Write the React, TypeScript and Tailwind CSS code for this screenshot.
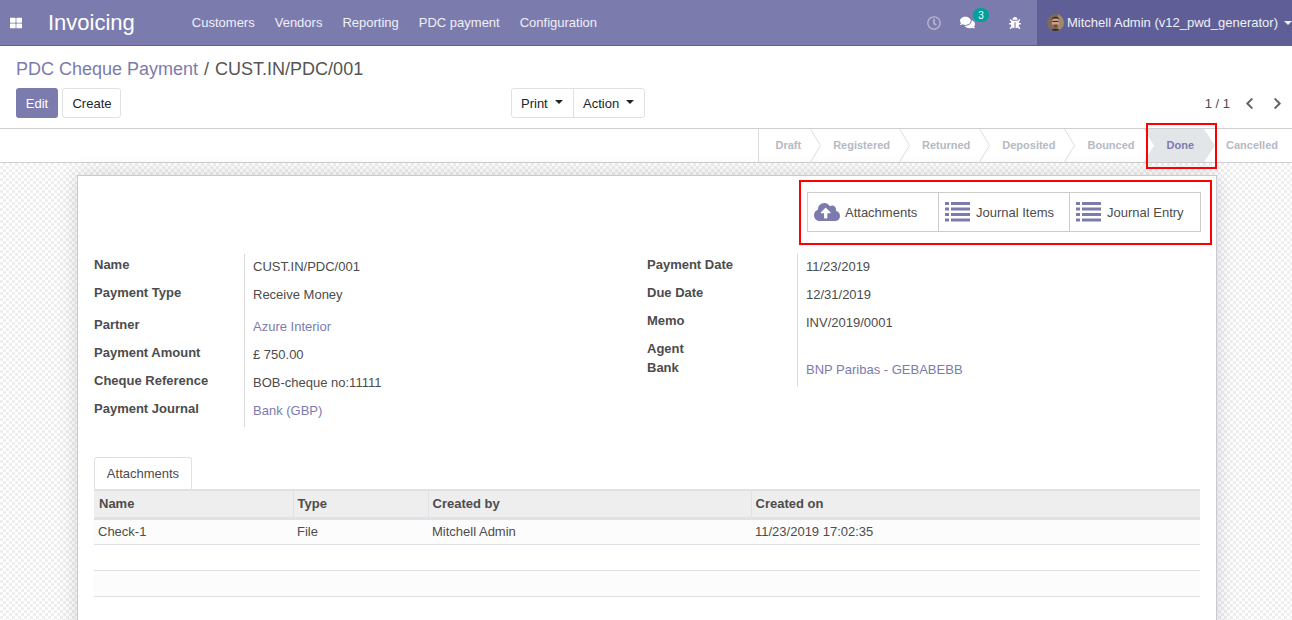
import { FaBug, FaChevronLeft, FaChevronRight, FaCloudUploadAlt, FaComments, FaRegClock, FaThLarge } from "react-icons/fa";

const menus = ["Customers", "Vendors", "Reporting", "PDC payment", "Configuration"];
const steps = ["Draft", "Registered", "Returned", "Deposited", "Bounced", "Done", "Cancelled"];

const leftFields = [
    { label: "Name", value: "CUST.IN/PDC/001", h: "h-[28px]" },
    { label: "Payment Type", value: "Receive Money", h: "h-[32px]" },
    { label: "Partner", value: "Azure Interior", link: true, h: "h-[28px]" },
    { label: "Payment Amount", value: "£ 750.00", h: "h-[28px]" },
    { label: "Cheque Reference", value: "BOB-cheque no:11111", h: "h-[28px]" },
    { label: "Payment Journal", value: "Bank (GBP)", link: true, h: "h-[29px]" },
];

const rightFields = [
    { label: "Payment Date", value: "11/23/2019", h: "h-[28px]" },
    { label: "Due Date", value: "12/31/2019", h: "h-[28px]" },
    { label: "Memo", value: "INV/2019/0001", h: "h-[28px]" },
    { label: "Agent", value: "", h: "h-[19px]" },
    { label: "Bank", value: "BNP Paribas - GEBABEBB", link: true, h: "h-[29px]" },
];

function ListIcon() {
    return (
        <svg width="25" height="20" viewBox="0 0 25 20" fill="#7C7BAD">
            <rect x="0" y="0" width="4" height="3" />
            <rect x="6" y="0" width="19" height="3" />
            <rect x="0" y="5.5" width="4" height="3" />
            <rect x="6" y="5.5" width="19" height="3" />
            <rect x="0" y="11" width="4" height="3" />
            <rect x="6" y="11" width="19" height="3" />
            <rect x="0" y="16.5" width="4" height="3" />
            <rect x="6" y="16.5" width="19" height="3" />
        </svg>
    );
}

function Avatar() {
    return (
        <svg width="17" height="17" viewBox="0 0 17 17" className="rounded-full">
            <rect width="17" height="17" fill="#7d6a58" />
            <rect x="11" width="6" height="17" fill="#a08a6c" />
            <ellipse cx="8.5" cy="8.5" rx="3.6" ry="4.6" fill="#cf9f8c" />
            <path d="M4.5 6 C5 1.5 12 1.5 12.5 6 L11 4.5 L6 4.5 Z" fill="#33261f" />
            <rect x="5.5" y="7" width="6" height="1" fill="#33261f" />
            <path d="M6 10.5 H11 L10 13 H7 Z" fill="#6b4a3c" />
            <path d="M4 17 C4 14 13 14 13 17 Z" fill="#2f2a2a" />
        </svg>
    );
}

function Field({ label, value, link, h }: { label: string; value: string; link?: boolean; h: string }) {
    return (
        <div className={`flex ${h}`}>
            <div className="w-[150px] shrink-0 font-bold text-[#4c4c4c] leading-[20px] pt-[1px]">{label}</div>
            <div className={`border-l border-[#d9d9d9] pl-[8px] pt-[3px] leading-[20px] flex-1 ${link ? "text-[#7C7BAD]" : "text-[#4c4c4c]"}`}>
                {value}
            </div>
        </div>
    );
}

function Step({ name, index }: { name: string; index: number }) {
    const done = name === "Done";
    const last = index === steps.length - 1;
    return (
        <div className={`relative flex h-full items-center px-[16px] font-bold text-[11px] ${done ? "text-[#7C7BAD]" : "text-[#b5b9c4]"}`}>
            {done && (
                <svg className="absolute left-[-7px] top-0 h-full" width="71" height="33" viewBox="0 0 71 33">
                    <path d="M0 0 H60 L71 16.5 L60 33 H0 L11 16.5 Z" fill="#e3e6e9" />
                </svg>
            )}
            <span className="relative">{name}</span>
            {!last && !done && (
                <svg className="absolute right-[-4px] top-0 h-full" width="11" height="33" viewBox="0 0 11 33" fill="none">
                    <path d="M0.5 0 L10.5 16.5 L0.5 33" stroke="#dcdcdc" />
                </svg>
            )}
        </div>
    );
}

export default function App() {
    return (
        <div className="relative h-[620px] w-[1292px] overflow-hidden bg-white font-['Liberation_Sans',Arial,sans-serif] text-[13px] text-[#4c4c4c]">
            <header className="flex h-[46px] items-center border-b border-[#5f5e97] bg-[#7C7BAD] text-white">
                <FaThLarge className="ml-[10px] text-[12px]" />
                <span className="ml-[26px] text-[22px]">Invoicing</span>
                <nav className="ml-[57px] flex gap-[20px] text-[13px] text-[#f0f0f7]">
                    {menus.map((m) => (
                        <span key={m}>{m}</span>
                    ))}
                </nav>
                <div className="ml-auto flex h-full items-center">
                    <FaRegClock className="text-[14px] text-[#b9b9d4]" />
                    <div className="relative ml-[19px]">
                        <FaComments className="text-[15px]" />
                        <span className="absolute left-[13px] top-[-7px] flex h-[14px] w-[16px] items-center justify-center rounded-full bg-[#00A09D] text-[10px]">3</span>
                    </div>
                    <FaBug className="ml-[34px] text-[12px]" />
                    <div className="ml-[16px] flex h-full w-[255px] items-center bg-[#5f5e97] pl-[10px]">
                        <Avatar />
                        <span className="ml-[3px] text-[13px] text-[#f0f0f7]">Mitchell Admin (v12_pwd_generator)</span>
                        <span className="ml-[6px] h-0 w-0 border-x-[4px] border-t-[4px] border-x-transparent border-t-[#f0f0f7]" />
                    </div>
                </div>
            </header>

            <section className="h-[83px] border-b border-[#cfcfcf] px-[16px]">
                <div className="flex h-[42px] items-end pb-[7px] text-[18px] leading-[24px] text-[#555555]">
                    <span className="text-[#7C7BAD]">PDC Cheque Payment</span>
                    <span className="mx-[6px]">/</span>
                    <span>CUST.IN/PDC/001</span>
                </div>
                <div className="flex items-start">
                    <button className="h-[30px] w-[42px] rounded-[3px] bg-[#7C7BAD] pt-[2px] text-white">Edit</button>
                    <button className="ml-[4px] h-[30px] w-[59px] rounded-[3px] border border-[#dee2e6] pl-px pt-[2px] text-[#212529]">Create</button>
                    <div className="ml-[390px] flex h-[30px] rounded-[3px] border border-[#dee2e6] text-[#212529]">
                        <div className="flex w-[61px] items-center pl-[9px] pt-[2px]">
                            Print
                            <span className="ml-[7px] h-0 w-0 -translate-y-[2px] border-x-[4px] border-t-[4px] border-x-transparent border-t-[#212529]" />
                        </div>
                        <div className="flex w-[71px] items-center border-l border-[#dee2e6] pl-[9px] pt-[2px]">
                            Action
                            <span className="ml-[7px] h-0 w-0 -translate-y-[2px] border-x-[4px] border-t-[4px] border-x-transparent border-t-[#212529]" />
                        </div>
                    </div>
                    <div className="-mr-[8px] ml-auto flex h-[30px] items-center">
                        <span className="pt-[2px]">1 / 1</span>
                        <FaChevronLeft className="ml-[13px] text-[13px] text-[#666]" />
                        <FaChevronRight className="ml-[15px] text-[13px] text-[#666]" />
                    </div>
                </div>
            </section>

            <section className="flex h-[34px] justify-end border-b border-[#cfcfcf]">
                <div className="-mr-[2px] flex h-[33px] border-l border-[#dcdcdc]">
                    {steps.map((s, i) => (
                        <Step key={s} name={s} index={i} />
                    ))}
                </div>
            </section>

            <main className="h-[457px] bg-[repeating-conic-gradient(#efefef_0_25%,#ffffff_0_50%)] bg-[length:6px_6px] pt-[12px]">
                <div className="ml-[77px] h-[500px] w-[1140px] border border-[#c9c9d1] bg-white pl-[16px] pr-[15px] pt-[16px] shadow-[0_0_20px_rgba(0,0,0,0.15)]">
                    <div className="flex justify-end">
                        <div className="flex h-[40px] w-[394px] border border-[#cccccc]">
                            <div className="flex w-[130px] items-center pl-[6px]">
                                <FaCloudUploadAlt className="text-[26px] text-[#7C7BAD]" />
                                <span className="ml-[5px] pt-[2px]">Attachments</span>
                            </div>
                            <div className="flex w-[131px] items-center border-l border-[#cccccc] pl-[6px]">
                                <ListIcon />
                                <span className="ml-[6px] pt-[2px]">Journal Items</span>
                            </div>
                            <div className="flex flex-1 items-center border-l border-[#cccccc] pl-[6px]">
                                <ListIcon />
                                <span className="ml-[6px] pt-[2px]">Journal Entry</span>
                            </div>
                        </div>
                    </div>

                    <div className="mt-[22px] flex">
                        <div className="w-[553px]">
                            {leftFields.map((f) => (
                                <Field key={f.label} {...f} />
                            ))}
                        </div>
                        <div className="w-[553px]">
                            {rightFields.map((f) => (
                                <Field key={f.label} {...f} />
                            ))}
                        </div>
                    </div>

                    <div className="mt-[30px] flex h-[32px]">
                        <div className="flex h-[33px] w-[98px] items-center justify-center rounded-t-[3px] border border-b-0 border-[#dee2e6] bg-white">Attachments</div>
                    </div>
                    <table className="relative w-[1106px] table-fixed border-collapse">
                        <thead>
                            <tr className="h-[28px] border-t-[2px] border-b-[3px] border-[#dee2e6] bg-[#eeeeee] text-left font-bold">
                                <th className="w-[199px] border-r-[1px] border-[#dee2e6] pl-[5px]">Name</th>
                                <th className="w-[135px] border-r-[1px] border-[#dee2e6] pl-[4px]">Type</th>
                                <th className="w-[323px] border-r-[1px] border-[#dee2e6] pl-[4px]">Created by</th>
                                <th className="pl-[4px]">Created on</th>
                            </tr>
                        </thead>
                        <tbody>
                            <tr className="h-[26px] border-b border-[#dee2e6] bg-[#fcfcfc]">
                                <td className="pl-[4px]">Check-1</td>
                                <td className="pl-[4px]">File</td>
                                <td className="pl-[4px]">Mitchell Admin</td>
                                <td className="pl-[4px]">11/23/2019 17:02:35</td>
                            </tr>
                            <tr className="h-[26px] border-b border-[#dee2e6] bg-white">
                                <td colSpan={4} />
                            </tr>
                            <tr className="h-[26px] border-b border-[#dee2e6] bg-[#fcfcfc]">
                                <td colSpan={4} />
                            </tr>
                        </tbody>
                    </table>
                </div>
            </main>

            <div className="absolute left-[1146px] top-[123px] h-[46px] w-[71px] border-2 border-[#ff0000]" />
            <div className="absolute left-[799px] top-[180px] h-[65px] w-[413px] border-2 border-[#ff0000]" />
        </div>
    );
}
